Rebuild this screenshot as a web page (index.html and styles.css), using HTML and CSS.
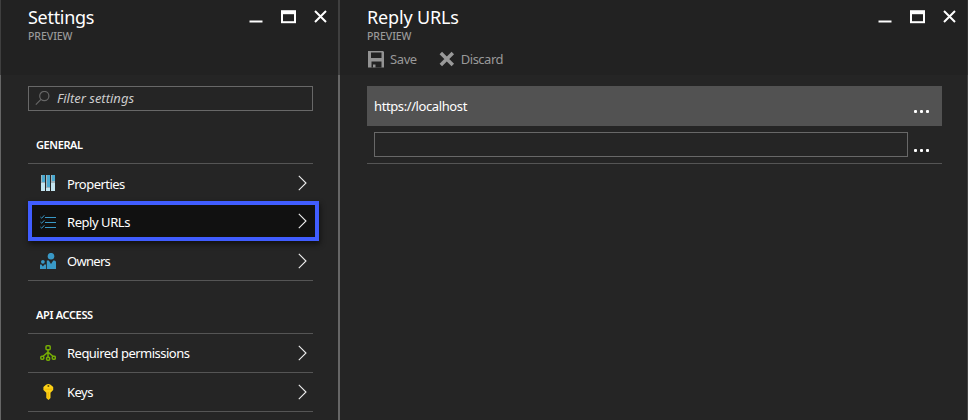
FILE: index.html
```html
<!DOCTYPE html>
<html lang="en">
<head>
<meta charset="utf-8">
<title>Settings</title>
<link rel="stylesheet" href="styles.css">
</head>
<body>
<svg class="defs" aria-hidden="true">
  <symbol id="controls" viewBox="0 0 80 16">
    <path d="M.5 12.500h13" stroke="#fff" stroke-width="2"/>
    <path d="M32 1.200h15v13H32z" fill="#fff"/><path d="M34 5.200h11v7H34z" fill="#222"/>
    <path d="M66 2l11 11M77 2L66 13" stroke="#fff" stroke-width="2"/>
  </symbol>
  <symbol id="chevron" viewBox="0 0 10 16"><path d="M.8 .8l7.200 7.200L.8 15.200" fill="none" stroke="#eee" stroke-width="1.100"/></symbol>
</svg>
<main class="app">
  <section class="blade settings">
    <header class="head">
      <div><h1 class="t-settings">Settings</h1><p class="sub">PREVIEW</p></div>
      <svg class="controls"><use href="#controls"/></svg>
    </header>
    <div class="body">
      <div class="filter">
        <svg width="16" height="16" viewBox="0 0 16 16" fill="none" stroke="#666" stroke-width="1.200"><circle cx="9.300" cy="5" r="4.600"/><path d="M6 8.300L.8 13.700"/></svg>
        <span>Filter settings</span>
      </div>
      <h2 class="t-general">GENERAL</h2>
      <ul class="menu">
        <li class="low"><svg class="icon" viewBox="0 0 16 16"><path d="M1 0h4v16H1zM6 0h4v16H6zM11 0h4v16h-4z" fill="#9fb4bd"/><path d="M2 0h3v7H2zM7 0h3v12H7zM12 0h3v6h-3z" fill="#4ba9d0"/><path d="M1 8h4v8H1zM6 13h4v3H6zM11 8h4v8h-4z" fill="#c3e4ef"/></svg><span class="t-properties">Properties</span><svg class="chev"><use href="#chevron"/></svg></li>
        <li class="selected low"><svg class="icon" viewBox="0 0 16 16" fill="none" stroke="#3999c6"><path d="M5 3.500h11M5 8.500h11M5 13.500h11" stroke-width="1.200"/><path d="M.4 3l1.300 1.200L4.300 1.300M.4 8l1.300 1.200 2.600-2.900M.4 13l1.300 1.200 2.600-2.900" stroke-width="1"/></svg><span class="t-reply">Reply URLs</span><svg class="chev"><use href="#chevron"/></svg></li>
        <li><svg class="icon" viewBox="0 0 16 16" fill="#3999c6"><circle cx="11" cy="3.200" r="3.300"/><path d="M6.800 7.500h2l2.200 3.500 2.300-3.500h1q1.700 0 1.700 1.700V16H6.800z"/><circle cx="2.900" cy="8.800" r="1.900"/><path d="M0 11.500h1.400l1.500 2 1.500-2H6V16H0z"/></svg><span class="t-owners">Owners</span><svg class="chev"><use href="#chevron"/></svg></li>
      </ul>
      <h2 class="t-api">API ACCESS</h2>
      <ul class="menu">
        <li><svg class="icon" viewBox="0 0 16 16" fill="none" stroke="#76ad05" stroke-width="1.500"><rect x="6" y=".8" width="4.200" height="4" rx="1"/><path d="M8 5v7M8 7.200L2.800 11.500M8 7.200l5.200 4.300"/><rect x=".8" y="11.200" width="3" height="3" rx="1"/><rect x="6.600" y="12.200" width="3" height="3" rx="1"/><rect x="12.300" y="11.200" width="3" height="3" rx="1"/></svg><span class="t-required">Required permissions</span><svg class="chev"><use href="#chevron"/></svg></li>
        <li><svg class="icon" viewBox="0 0 16 16"><path d="M6 .8Q8.300-.8 10.600.8L13.200 3V6L10.500 8.800V14L8.500 16 6.300 14V8.800L3.400 6V3z" fill="#fcd116"/><circle cx="8.400" cy="2" r="1" fill="#6b5500"/><path d="M4.500 5.200h7.500" stroke="#f0b800"/><path d="M8.200 8v6.500" stroke="#e8a800" stroke-width=".8"/></svg><span class="t-keys">Keys</span><svg class="chev"><use href="#chevron"/></svg></li>
      </ul>
    </div>
  </section>
  <section class="blade reply">
    <header class="head">
      <div><h1 class="t-title">Reply URLs</h1><p class="sub">PREVIEW</p>
        <div class="toolbar">
          <svg width="18" height="18" viewBox="0 0 18 18"><path d="M1 1h15l1 1v15.500H1z" fill="#939393"/><path d="M4 2.500h10.500v5.500H4zM4.500 11.500h10v6H8.500v-3H6v3H4.500z" fill="#222"/></svg>
          <span class="t-save">Save</span>
          <svg class="discard" width="16" height="16" viewBox="0 0 16 16"><path d="M1.800 2l12 12M13.800 2l-12 12" stroke="#999" stroke-width="3.500"/></svg>
          <span class="t-discard">Discard</span>
        </div>
      </div>
      <svg class="controls"><use href="#controls"/></svg>
    </header>
    <div class="body">
      <div class="url"><span class="t-url">https://localhost</span><i class="more"><b></b><b></b><b></b></i></div>
      <div class="url empty"><div class="input"></div><i class="more"><b></b><b></b><b></b></i></div>
    </div>
  </section>
</main>
</body>
</html>
```
FILE: styles.css
```css
* { box-sizing: border-box; }
body { margin: 0; background: #252525; color: #fff; font: 13px/16px "Noto Sans", "Open Sans", sans-serif; }
h1, h2, p, ul { margin: 0; padding: 0; }
ul { list-style: none; }
span, h1, h2, p { white-space: nowrap; }
svg { display: block; flex: none; }
.defs { position: absolute; width: 0; height: 0; }
.app { display: flex; height: 420px; overflow: hidden; }
.blade { display: flex; flex-direction: column; }
.settings { width: 340px; }
.reply { width: 628px; }
.head { display: flex; justify-content: space-between; height: 75px; background: #222; border-right: 2px solid #3f3f3f; }
.body { flex: 1; border-right: 2px solid #666; }
.settings .head { padding: 5px 9px 0 27px; border-left: 1px solid #3f3f3f; }
.settings .body { padding: 11px 25px 0 27px; border-left: 1px solid #666; }
.reply .head { padding: 5px 9px 0 27px; border-right: 1px solid #333; }
.reply .body { padding: 11px 25px 0 27px; border-right: 1px solid #444; }
h1 { font-size: 18px; line-height: 24px; font-weight: 400; }
.t-settings { letter-spacing: -.3px; }
.t-title { letter-spacing: -.15px; }
.sub { font-size: 10.5px; line-height: 14px; font-weight: 500; color: #999; letter-spacing: -.05px; }
.controls { width: 80px; height: 16px; margin-top: 4px; }
.filter { display: flex; align-items: center; height: 25px; border: 1px solid #686868; padding-left: 6px; gap: 6px; font-style: italic; color: #ccc; letter-spacing: 0; }
.filter span { margin-top: -1px; }
h2 { font-size: 11px; line-height: 16px; font-weight: 600; margin-top: 26px; margin-bottom: 10px; padding-left: 8px; }
.menu { border-top: 1px solid #555; }
.menu li { display: flex; align-items: center; height: 39px; padding: 1px 5px 0 12px; border-bottom: 1px solid #555; }
.menu li span { margin-top: -1px; }
.menu .low span { margin-top: 1px; }
.icon { width: 16px; height: 16px; margin-right: 11px; margin-top: -2px; }
.selected .icon { margin-top: 0; }
.chev { width: 10px; height: 16px; margin-left: auto; margin-top: -2px; }
.menu .selected { height: 40px; margin: -2px -6px 1px 0; padding: 1px 7px 0 8px; background: #111; border: 4px solid #405dff; box-shadow: 1px 3px 5px #111; position: relative; }
.toolbar { display: flex; align-items: center; height: 20px; margin-top: 6px; color: #999; }
.t-save { margin-left: 5px; }
.discard { margin-left: 22px; margin-right: 6px; }
.url { display: flex; align-items: center; justify-content: space-between; height: 40px; padding: 0 13px 0 7px; background: #525252; }
.empty { height: 38px; background: none; border-bottom: 1px solid #555; }
.input { width: 534px; height: 25px; border: 1px solid #686868; }
.more { display: flex; gap: 3px; margin-top: 11px; }
.more b { width: 3px; height: 3px; border-radius: 1px; background: #fff; }
.t-general { letter-spacing: -.4px; }
.t-api { letter-spacing: -.35px; }
.menu span, .toolbar span { letter-spacing: -.5px; }
.menu .t-properties { letter-spacing: -.55px; }
.menu .t-reply { letter-spacing: -.45px; }
.menu .t-owners { letter-spacing: -.7px; }
.menu .t-required { letter-spacing: -.52px; }
.toolbar .t-save { letter-spacing: -.4px; }
.t-url { letter-spacing: -.4px; }
```
